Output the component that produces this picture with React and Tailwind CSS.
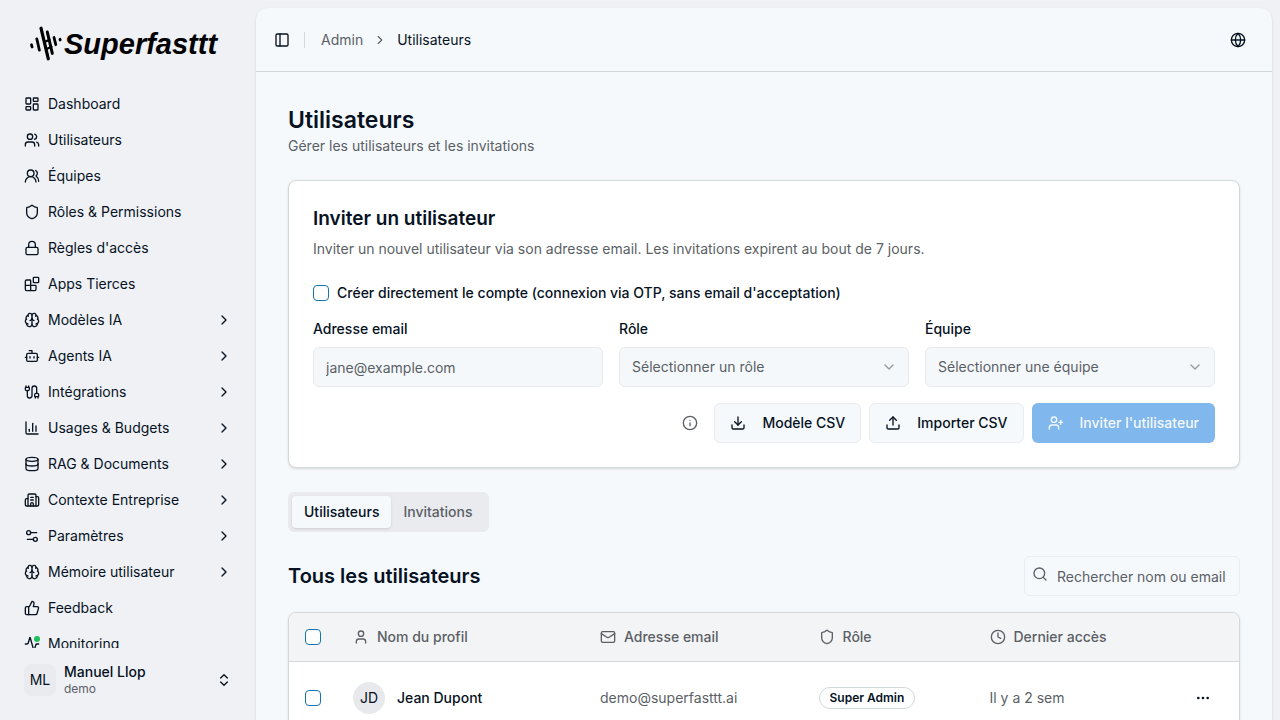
import React from "react";
import {
  LayoutDashboard, Users, UsersRound, Shield, Lock, Blocks, Brain, Bot, Cable, ChartColumn, Database,
  Building2, Settings2, ThumbsUp, Activity, ChevronRight, ChevronsUpDown, PanelLeft, Globe, Info,
  Download, Upload, UserPlus, ChevronDown, Search, User, Mail, Clock, Ellipsis,
} from "lucide-react";

const NAV = [
  { label: "Dashboard", icon: LayoutDashboard },
  { label: "Utilisateurs", icon: Users },
  { label: "Équipes", icon: UsersRound },
  { label: "Rôles & Permissions", icon: Shield },
  { label: "Règles d'accès", icon: Lock },
  { label: "Apps Tierces", icon: Blocks },
  { label: "Modèles IA", icon: Brain, more: true },
  { label: "Agents IA", icon: Bot, more: true },
  { label: "Intégrations", icon: Cable, more: true },
  { label: "Usages & Budgets", icon: ChartColumn, more: true },
  { label: "RAG & Documents", icon: Database, more: true },
  { label: "Contexte Entreprise", icon: Building2, more: true },
  { label: "Paramètres", icon: Settings2, more: true },
  { label: "Mémoire utilisateur", icon: Brain, more: true },
  { label: "Feedback", icon: ThumbsUp },
  { label: "Monitoring", icon: Activity, dot: true },
];

function Logo() {
  return (
    <a href="#" className="flex h-14 items-center gap-0.5 px-3 text-black">
      <svg viewBox="28 26 34 36" className="h-9 w-[34px] shrink-0" fill="none" stroke="currentColor" strokeLinecap="round">
        <path d="M31.500 44.800l.6 2.200" strokeWidth="2.800" />
        <path d="M36.800 38.800l2.600 11.400" strokeWidth="2.800" />
        <path d="M41 28.200l7.300 30.600" strokeWidth="3.200" />
        <path d="M47.300 32l5 21.400" strokeWidth="3" />
        <path d="M44.500 42l5-2.200M46.500 49l5-2.200" strokeWidth="2.200" />
        <path d="M54 37.500l1.800 7.200" strokeWidth="2.800" />
        <path d="M60 39.300l.2.700" strokeWidth="2.800" />
      </svg>
      <span className="font-['Liberation_Sans',sans-serif] text-[29px] leading-9 font-bold italic">Superfasttt</span>
    </a>
  );
}

function Sidebar() {
  return (
    <aside className="flex w-64 shrink-0 flex-col p-2">
      <div className="px-2 pt-2"><Logo /></div>
      <nav className="min-h-0 flex-1 overflow-x-hidden overflow-y-auto px-2 pt-4 [scrollbar-width:none]">
        <ul className="flex flex-col gap-1">
          {NAV.map(({ label, icon: Icon, more, dot }) => (
            <li key={label}>
              <a href="#" className="flex h-8 items-center gap-2 rounded-md px-2 text-sm">
                <span className="relative block size-4">
                  <Icon className="size-4" />
                  {dot && <span className="absolute top-0 right-0 size-1.5 rounded-full bg-[#1fbf5c]" />}
                </span>
                <span className="flex-1">{label}</span>
                {more && <ChevronRight className="size-4" />}
              </a>
            </li>
          ))}
        </ul>
      </nav>
      <button type="button" className="flex h-16 shrink-0 items-center gap-2 px-4 text-left">
        <span className="flex size-8 items-center justify-center rounded-lg bg-[#eaebee] text-sm">ML</span>
        <span className="flex flex-1 flex-col">
          <span className="text-sm leading-[18px] font-medium">Manuel Llop</span>
          <span className="text-xs text-[#5b5f66]">demo</span>
        </span>
        <ChevronsUpDown className="size-4" />
      </button>
    </aside>
  );
}

function Check({ id, label }) {
  return (
    <input
      type="checkbox"
      id={id}
      aria-label={label}
      className="block size-4 shrink-0 appearance-none rounded border border-[#1676ab] bg-white checked:bg-[#1676ab]"
    />
  );
}

function SelectField({ id, label, placeholder }) {
  return (
    <div className="flex flex-col gap-2">
      <label htmlFor={id} className="text-sm font-medium">{label}</label>
      <div className="relative">
        <select id={id} className="h-10 w-full appearance-none rounded-md border border-[#e6eaed] bg-[#f5f8fb] px-3 text-sm text-[#5b5f66]">
          <option>{placeholder}</option>
        </select>
        <ChevronDown className="pointer-events-none absolute top-3 right-3 size-4 text-[#96999e]" />
      </div>
    </div>
  );
}

function InviteCard() {
  const outline = "flex h-10 items-center gap-4 rounded-md border border-[#e9edf0] bg-[#f5f9fc] px-[15px] text-sm font-medium";
  return (
    <section className="mt-6 rounded-lg border border-[#d3d8da] bg-white p-6 shadow-sm">
      <h2 className="text-[19px] leading-7 font-semibold">Inviter un utilisateur</h2>
      <p className="mt-1.5 text-sm text-[#5b5f66]">
        Inviter un nouvel utilisateur via son adresse email. Les invitations expirent au bout de 7 jours.
      </p>
      <div className="mt-6 flex items-center gap-2">
        <Check id="direct" />
        <label htmlFor="direct" className="text-sm font-medium">
          Créer directement le compte (connexion via OTP, sans email d'acceptation)
        </label>
      </div>
      <div className="mt-4 grid grid-cols-3 gap-4">
        <div className="flex flex-col gap-2">
          <label htmlFor="email" className="text-sm font-medium">Adresse email</label>
          <input
            id="email"
            type="email"
            placeholder="jane@example.com"
            className="h-10 rounded-md border border-[#e6eaed] bg-[#f5f8fb] px-3 text-sm placeholder:text-[#5b5f66]"
          />
        </div>
        <SelectField id="role" label="Rôle" placeholder="Sélectionner un rôle" />
        <SelectField id="team" label="Équipe" placeholder="Sélectionner une équipe" />
      </div>
      <div className="mt-4 flex items-center justify-end gap-2">
        <button type="button" aria-label="Informations" className="p-2 text-[#5b5f66]"><Info className="size-4" /></button>
        <button type="button" className={outline}><Download className="size-4" />Modèle CSV</button>
        <button type="button" className={outline}><Upload className="size-4" />Importer CSV</button>
        <button type="button" disabled className="flex h-10 items-center gap-4 rounded-md bg-[#80b7ec] px-4 text-sm font-medium text-[#f3f8fd]">
          <UserPlus className="size-4" />Inviter l'utilisateur
        </button>
      </div>
    </section>
  );
}

function Heading({ icon: Icon, children }) {
  return (
    <th scope="col" className="px-4 text-left font-medium">
      <span className="flex items-center gap-2"><Icon className="size-4" />{children}</span>
    </th>
  );
}

function UsersTable() {
  return (
    <div className="mt-4 overflow-hidden rounded-lg border border-[#d3d8da] bg-white shadow-sm">
      <table className="w-full table-fixed text-sm">
        <colgroup>
          <col className="w-12" />
          <col className="w-[26%]" />
          <col className="w-[23%]" />
          <col className="w-[18%]" />
          <col />
          <col className="w-16" />
        </colgroup>
        <thead className="bg-[#f3f4f5] text-[#5b5f66]">
          <tr className="h-12 border-b border-[#d3d8da]">
            <th scope="col" className="pl-4"><Check label="Tout sélectionner" /></th>
            <Heading icon={User}>Nom du profil</Heading>
            <Heading icon={Mail}>Adresse email</Heading>
            <Heading icon={Shield}>Rôle</Heading>
            <Heading icon={Clock}>Dernier accès</Heading>
            <th scope="col" aria-label="Actions" />
          </tr>
        </thead>
        <tbody>
          <tr className="h-[73px]">
            <td className="pl-4"><Check label="Sélectionner Jean Dupont" /></td>
            <td className="px-4">
              <span className="flex items-center gap-3">
                <span className="flex size-8 items-center justify-center rounded-full bg-[#e8e9ec]">JD</span>
                <span className="font-medium">Jean Dupont</span>
              </span>
            </td>
            <td className="px-4 text-[#5b5f66]">demo@superfasttt.ai</td>
            <td className="px-4">
              <span className="inline-flex rounded-full border border-[#d3d8da] px-2.5 py-0.5 text-xs font-semibold">Super Admin</span>
            </td>
            <td className="px-4 text-[#5b5f66]">Il y a 2 sem</td>
            <td className="px-4">
              <button type="button" aria-label="Actions" className="block p-1"><Ellipsis className="size-4" /></button>
            </td>
          </tr>
        </tbody>
      </table>
    </div>
  );
}

export default function App() {
  return (
    <div className="flex h-screen overflow-hidden bg-[#eff1f5] font-['Inter',sans-serif] text-[#06121f]">
      <Sidebar />
      <main className="mt-2 mr-2 min-w-0 flex-1 overflow-hidden rounded-t-xl bg-[#f5f9fc] shadow-sm">
        <header className="flex h-16 items-center border-b border-[#d0d5d8] pr-6 pl-4 text-sm">
          <button type="button" aria-label="Basculer la barre latérale" className="p-0.5"><PanelLeft className="size-4" /></button>
          <span className="mx-3 h-4 w-px bg-[#d3d8da]" />
          <nav aria-label="Fil d'Ariane" className="ml-1 flex flex-1 items-center gap-2.5">
            <a href="#" className="text-[#5b5f66]">Admin</a>
            <ChevronRight className="size-3.5 text-[#5b5f66]" />
            <span>Utilisateurs</span>
          </nav>
          <button type="button" aria-label="Langue" className="p-0.5"><Globe className="size-4" /></button>
        </header>
        <div className="p-8">
          <h1 className="text-[23px] leading-8 font-semibold">Utilisateurs</h1>
          <p className="text-sm text-[#5b5f66]">Gérer les utilisateurs et les invitations</p>
          <InviteCard />
          <div role="tablist" className="mt-6 inline-flex h-10 items-center rounded-md bg-[#e9ebee] p-1 text-sm font-medium">
            <button type="button" role="tab" aria-selected="true" className="h-8 rounded bg-[#f5f9fc] px-3 shadow-sm">Utilisateurs</button>
            <button type="button" role="tab" aria-selected="false" className="h-8 px-3 text-[#5b5f66]">Invitations</button>
          </div>
          <div className="mt-6 flex items-center justify-between">
            <h2 className="text-xl font-semibold">Tous les utilisateurs</h2>
            <div className="relative w-54">
              <Search className="absolute top-2.5 left-2 size-4 text-[#5b5f66]" />
              <input
                type="text"
                aria-label="Rechercher nom ou email"
                placeholder="Rechercher nom ou email"
                className="h-10 w-full rounded-md border border-[#e9edf0] bg-[#f5f9fc] pr-1 pl-8 text-sm placeholder:text-[#5b5f66]"
              />
            </div>
          </div>
          <UsersTable />
        </div>
      </main>
    </div>
  );
}
